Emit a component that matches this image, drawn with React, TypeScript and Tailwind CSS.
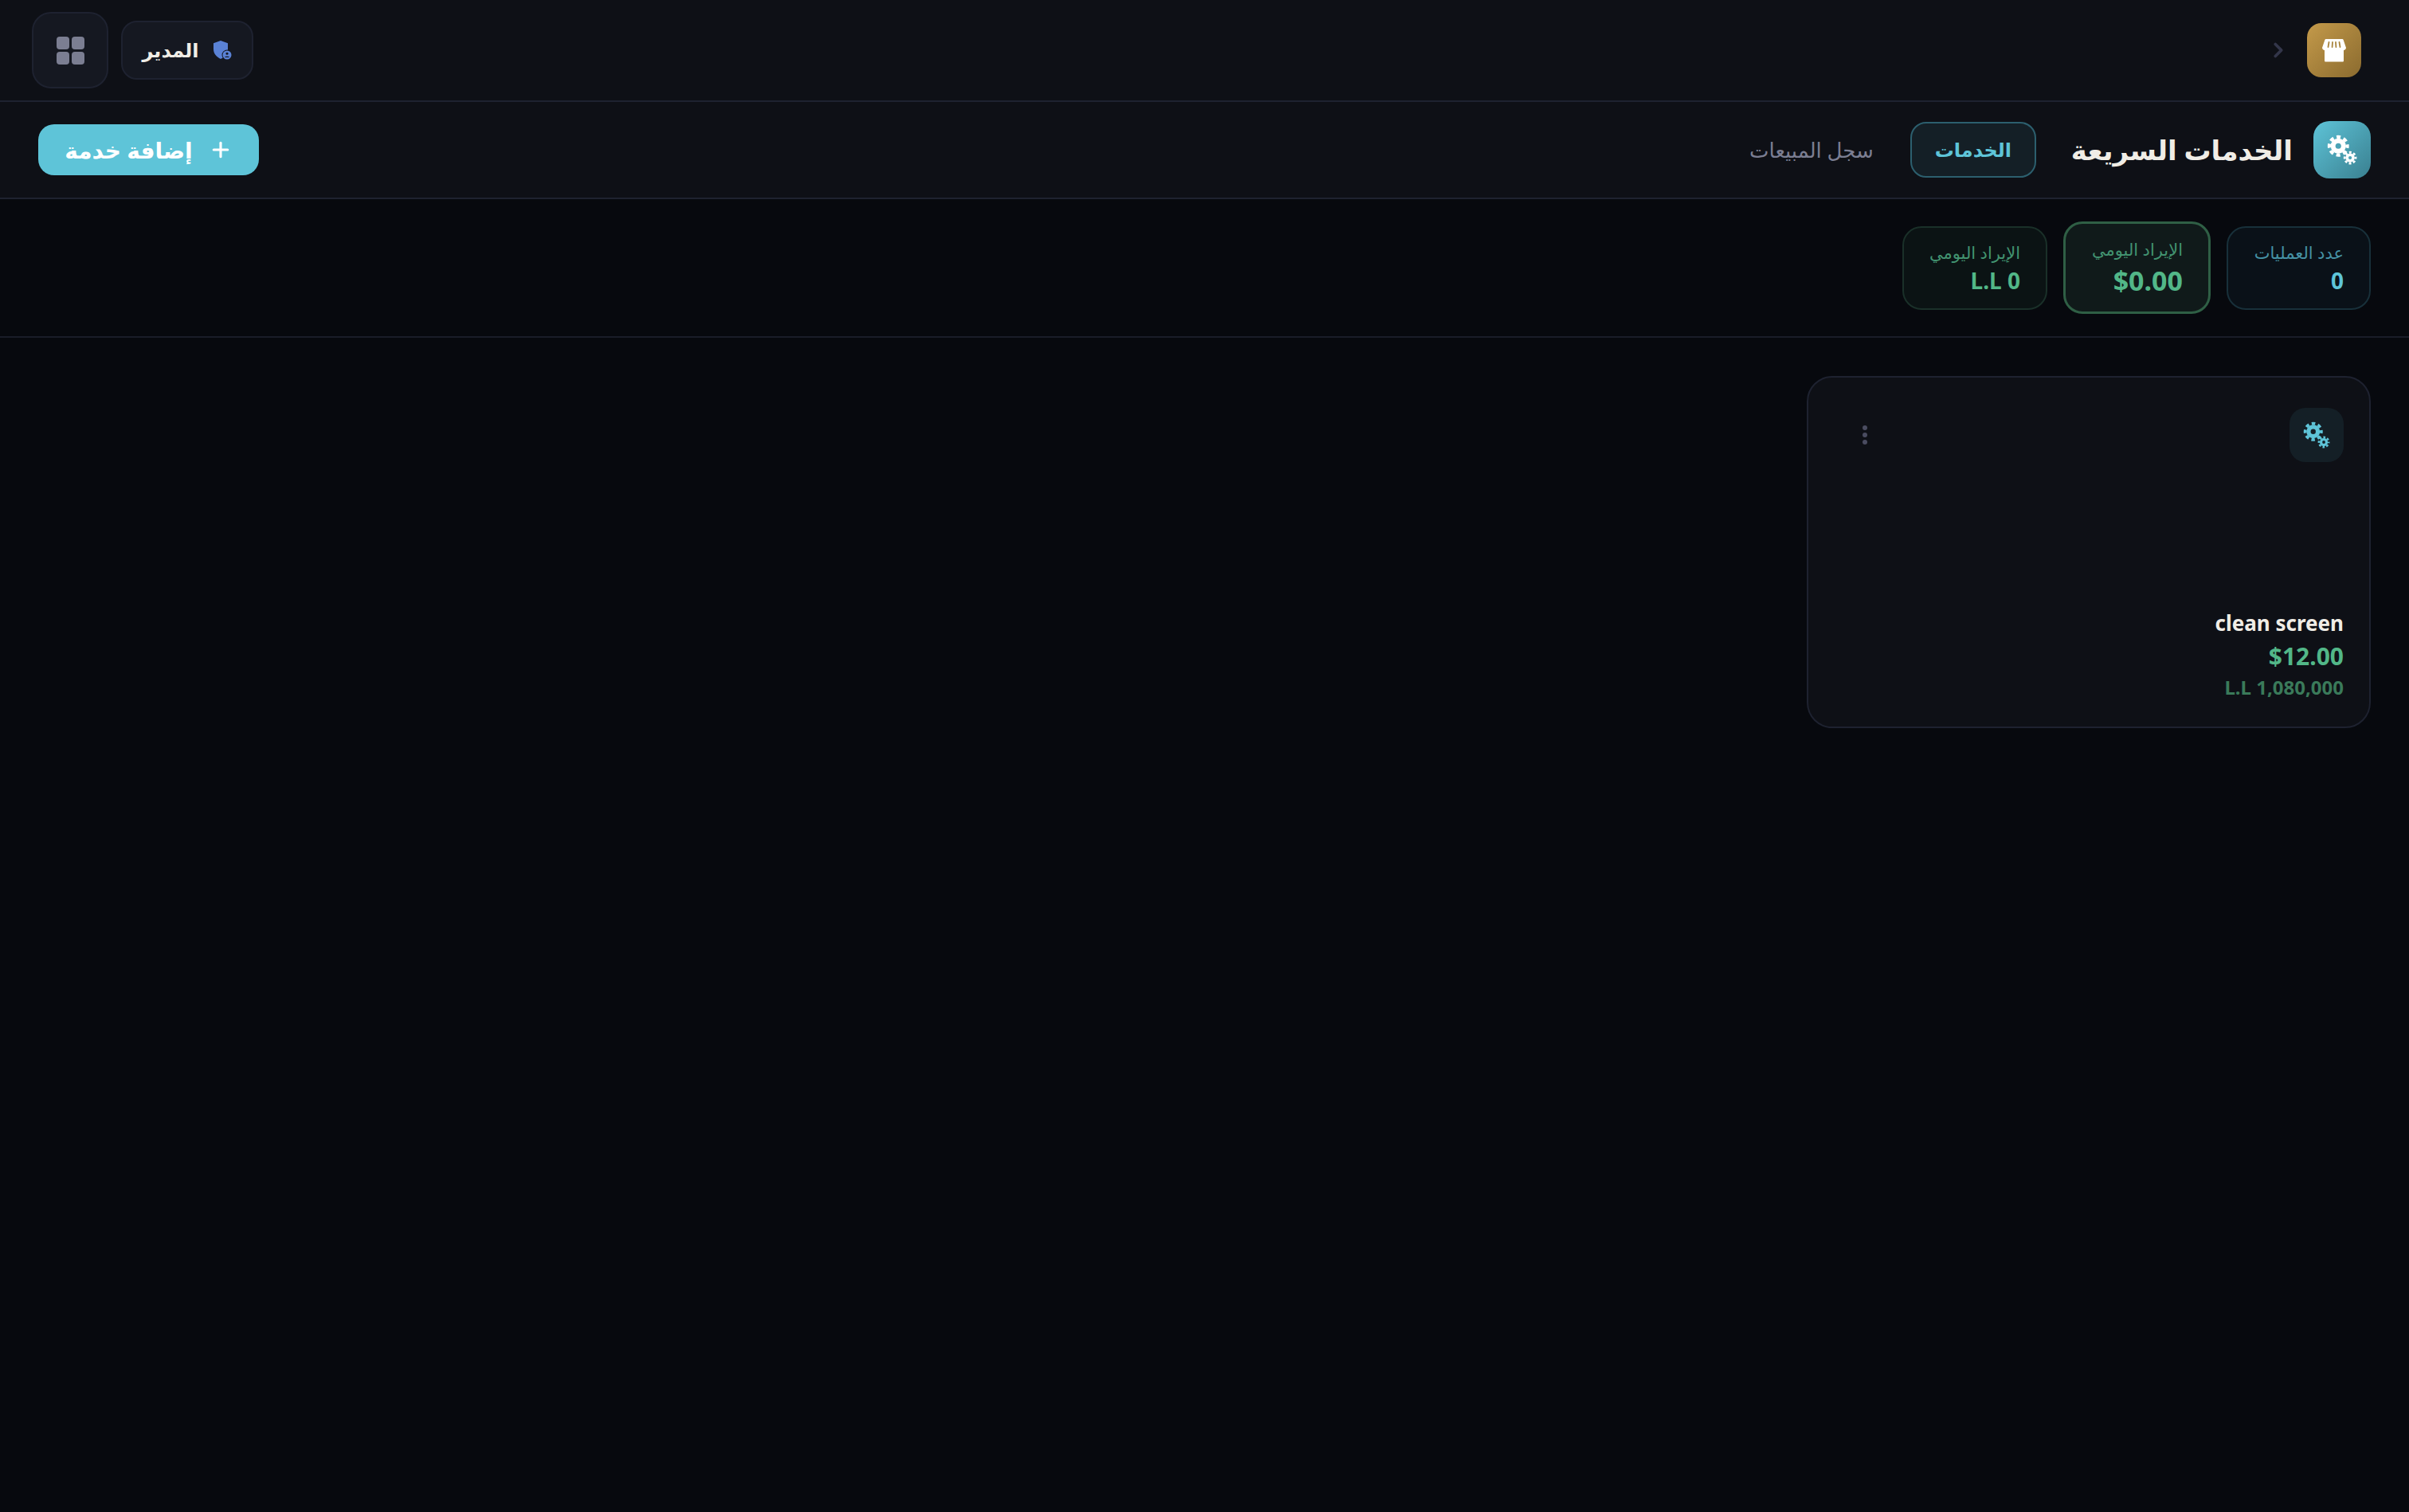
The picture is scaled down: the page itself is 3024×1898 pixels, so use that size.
import React from 'react';
import { ChevronRight, Plus } from 'lucide-react';

const font = "font-['Noto_Sans','DejaVu_Sans',sans-serif]";

const Gears = ({ size, color, hole }: { size: number; color: string; hole: string }) => (
  <svg width={size} height={size} viewBox="0 0 32 32">
    <circle cx="12" cy="12" r="9.500" fill="none" stroke={color} strokeWidth="3.600" strokeDasharray="4.200 3.260" strokeDashoffset="2.100" />
    <circle cx="12" cy="12" r="8" fill={color} />
    <circle cx="12" cy="12" r="3" fill={hole} />
    <circle cx="24.500" cy="24.500" r="5.800" fill="none" stroke={color} strokeWidth="2.400" strokeDasharray="2.500 2.050" strokeDashoffset="1.250" />
    <circle cx="24.500" cy="24.500" r="4.800" fill={color} />
    <circle cx="24.500" cy="24.500" r="1.800" fill={hole} />
  </svg>
);

const StoreIcon = () => (
  <svg width="32" height="32" viewBox="0 0 32 32">
    <path d="M6 2h20c1 0 1.500.5 1.800 1.500L31 13c0 1.600-1.500 2.800-3 3v13c0 1-.5 1.500-1.500 1.500h-21C4.500 30.500 4 30 4 29V16c-1.500-.2-3-1.400-3-3L4.200 3.500C4.500 2.500 5 2 6 2z" fill="#fff" />
    <path d="M9.500 6 8.500 12M14 6l-.4 6M18 6l.4 6M22.500 6l1 6" stroke="#a9853f" strokeWidth="1.800" strokeLinecap="round" />
  </svg>
);

const ShieldIcon = () => (
  <svg width="26" height="26" viewBox="0 0 26 26">
    <path d="M11 1l9 3.200v7.300c0 6-3.800 10-9 12.500-5.200-2.500-9-6.500-9-12.500V4.200z" fill="#5a82d6" />
    <circle cx="19" cy="19" r="6.500" fill="#151821" />
    <circle cx="19" cy="19" r="5.500" fill="#5a82d6" />
    <circle cx="19" cy="17.300" r="1.500" fill="#151821" />
    <path d="M16 22c.5-1.700 5.500-1.700 6 0z" fill="#151821" />
  </svg>
);

const GridIcon = () => (
  <div className="grid grid-cols-2 gap-[3px]">
    <div className="w-[16px] h-[16px] rounded-[4px] bg-[#7b7e92]"></div>
    <div className="w-[16px] h-[16px] rounded-[4px] bg-[#7b7e92]"></div>
    <div className="w-[16px] h-[16px] rounded-[4px] bg-[#7b7e92]"></div>
    <div className="w-[16px] h-[16px] rounded-[4px] bg-[#7b7e92]"></div>
  </div>
);

const App = () => {
  return (
    <div dir="rtl" className={`min-h-[1898px] bg-[#07090e] ${font}`}>
      <header className="h-[128px] flex items-center justify-between pr-[60px] pl-[40px] bg-[#0e1016] border-b-2 border-[#1e2230]">
        <div className="flex items-center gap-[21px]">
          <div className="w-[68px] h-[68px] rounded-[18px] flex items-center justify-center bg-gradient-to-br from-[#c49a4a] to-[#8b6b2f]">
            <StoreIcon />
          </div>
          <ChevronRight size={30} strokeWidth={3} className="text-[#33364a]" />
        </div>
        <div className="flex items-center gap-[16px]">
          <div className="h-[74px] w-[166px] flex items-center justify-center gap-[16px] rounded-[20px] bg-[#151821] border-2 border-[#1e2230]">
            <ShieldIcon />
            <span className="text-[24px] font-bold text-[#f0ede6]">المدير</span>
          </div>
          <button className="w-[96px] h-[96px] flex items-center justify-center rounded-[24px] bg-[#151821] border-2 border-[#1e2230]">
            <GridIcon />
          </button>
        </div>
      </header>

      <div className="h-[122px] flex items-center justify-between pr-[48px] pl-[48px] bg-[#0e1016] border-b-2 border-[#1e2230]">
        <div className="flex items-center">
          <div className="w-[72px] h-[72px] rounded-[20px] flex items-center justify-center bg-gradient-to-br from-[#5ec4d8] to-[#3a8090]">
            <Gears size={38} color="#ffffff" hole="#4ba3b6" />
          </div>
          <h1 className="mr-[26px] text-[34px] font-bold text-[#f0ede6]">الخدمات السريعة</h1>
          <div className="mr-[44px] flex items-center gap-[46px]">
            <button className="w-[158px] h-[70px] rounded-[20px] bg-[#141f26] border-2 border-[#2c5f6e] text-[24px] font-bold text-[#5ec4d8]">الخدمات</button>
            <button className="text-[26px] text-[#7b7e92]">سجل المبيعات</button>
          </div>
        </div>
        <button className="w-[277px] h-[64px] flex items-center justify-center gap-[20px] rounded-[20px] bg-[#5ec4d8] text-[28px] font-bold text-white">
          <Plus size={30} strokeWidth={2.500} />
          <span>إضافة خدمة</span>
        </button>
      </div>

      <div className="h-[174px] flex items-center gap-[20px] px-[48px] border-b-2 border-[#1a1d28]">
        <div className="w-[181px] h-[105px] px-[32px] flex flex-col justify-center rounded-[24px] bg-[#0a1118] border-2 border-[#18303a]">
          <span className="whitespace-nowrap text-[21px] leading-[32px] text-[#4592a5]">عدد العمليات</span>
          <span className="text-[28px] leading-[38px] font-bold text-[#5ec4d8]">0</span>
        </div>
        <div className="w-[185px] h-[116px] px-[32px] flex flex-col justify-center rounded-[24px] bg-[#101a1a] border-[3px] border-[#2f5f45]">
          <span className="whitespace-nowrap text-[21px] leading-[32px] text-[#429370]">الإيراد اليومي</span>
          <span dir="ltr" className="text-right text-[34px] leading-[46px] font-bold text-[#52b788]">$0.00</span>
        </div>
        <div className="w-[182px] h-[105px] px-[32px] flex flex-col justify-center rounded-[24px] bg-[#0b1314] border-2 border-[#1a3029]">
          <span className="whitespace-nowrap text-[21px] leading-[32px] text-[#429370]">الإيراد اليومي</span>
          <span dir="ltr" className="text-right text-[28px] leading-[38px] font-bold text-[#52b788]">L.L 0</span>
        </div>
      </div>

      <main className="px-[48px] pt-[48px]">
        <div className="w-[708px] h-[442px] px-[32px] pt-[38px] pb-[32px] flex flex-col justify-between rounded-[32px] bg-[#0e1016] border-2 border-[#1e2230]">
          <div className="flex items-center justify-between">
            <div className="w-[68px] h-[68px] rounded-[20px] flex items-center justify-center bg-[#141f26]">
              <Gears size={34} color="#5ec4d8" hole="#141f26" />
            </div>
            <div className="ml-[36px] flex flex-col gap-[3px]">
              <div className="w-[6px] h-[6px] rounded-full bg-[#4a4c60]"></div>
              <div className="w-[6px] h-[6px] rounded-full bg-[#4a4c60]"></div>
              <div className="w-[6px] h-[6px] rounded-full bg-[#4a4c60]"></div>
            </div>
          </div>
          <div className="flex flex-col">
            <span dir="ltr" className="text-right text-[26px] leading-[40px] font-bold text-[#f0ede6]">clean screen</span>
            <span dir="ltr" className="text-right text-[30px] leading-[44px] font-bold text-[#52b788]">$12.00</span>
            <span dir="ltr" className="text-right text-[24px] leading-[34px] font-bold text-[#3a7a5a]">L.L 1,080,000</span>
          </div>
        </div>
      </main>
    </div>
  );
};

export default App;
